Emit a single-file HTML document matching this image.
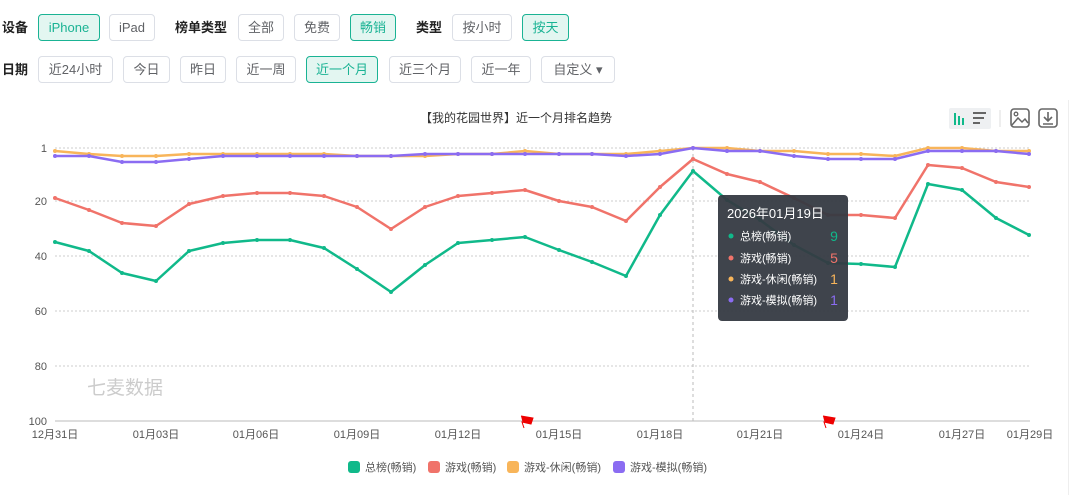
<!DOCTYPE html>
<html><head><meta charset="utf-8"><style>
body{margin:0;width:1080px;height:495px;background:#fff;font-family:"Liberation Sans","Noto Sans CJK SC",sans-serif;position:relative;overflow:hidden}
.b{position:absolute;height:27px;line-height:26px;box-sizing:border-box;border:1px solid #dcdfe6;border-radius:4px;font-size:13px;color:#606266;text-align:center;background:#fff}
.on{background:#e3f6f1;border-color:#1ab394;color:#1ab394}
.l{position:absolute;font-size:13px;font-weight:bold;color:#222;line-height:27px}
.t{position:absolute;font-size:12px;color:#333}
</style></head><body>
<div class="l" style="left:2px;top:14px">设备</div>
<div class="b on" style="left:38px;top:14px;width:62px">iPhone</div>
<div class="b" style="left:109px;top:14px;width:46px">iPad</div>
<div class="l" style="left:175px;top:14px">榜单类型</div>
<div class="b" style="left:238px;top:14px;width:46px">全部</div>
<div class="b" style="left:294px;top:14px;width:46px">免费</div>
<div class="b on" style="left:350px;top:14px;width:46px">畅销</div>
<div class="l" style="left:416px;top:14px">类型</div>
<div class="b" style="left:452px;top:14px;width:60px">按小时</div>
<div class="b on" style="left:522px;top:14px;width:47px">按天</div>
<div class="l" style="left:2px;top:56px">日期</div>
<div class="b" style="left:38px;top:56px;width:75px">近24小时</div>
<div class="b" style="left:123px;top:56px;width:47px">今日</div>
<div class="b" style="left:180px;top:56px;width:46px">昨日</div>
<div class="b" style="left:236px;top:56px;width:60px">近一周</div>
<div class="b on" style="left:306px;top:56px;width:72px">近一个月</div>
<div class="b" style="left:389px;top:56px;width:72px">近三个月</div>
<div class="b" style="left:471px;top:56px;width:60px">近一年</div>
<div class="b" style="left:541px;top:56px;width:74px">自定义 ▾</div>
<div class="t" style="left:420px;top:109px;font-size:12px">【我的花园世界】近一个月排名趋势</div>
<div style="position:absolute;left:1068px;top:100px;width:1px;height:395px;background:#eee"></div>
<svg width="1080" height="495" style="position:absolute;left:0;top:0">
<defs>
<marker id="mg" markerWidth="4" markerHeight="4" refX="2" refY="2" markerUnits="userSpaceOnUse"><circle cx="2" cy="2" r="2" fill="#10b98a"/></marker>
<marker id="mr" markerWidth="4" markerHeight="4" refX="2" refY="2" markerUnits="userSpaceOnUse"><circle cx="2" cy="2" r="2" fill="#f0736a"/></marker>
<marker id="mo" markerWidth="4" markerHeight="4" refX="2" refY="2" markerUnits="userSpaceOnUse"><circle cx="2" cy="2" r="2" fill="#f8b55a"/></marker>
<marker id="mp" markerWidth="4" markerHeight="4" refX="2" refY="2" markerUnits="userSpaceOnUse"><circle cx="2" cy="2" r="2" fill="#8b6cf2"/></marker>
</defs>
<rect x="949" y="108" width="42" height="21" rx="2" fill="#eef0f2"/>
<g stroke="#10b98a" stroke-width="2"><line x1="955" y1="113" x2="955" y2="125"/><line x1="959" y1="116" x2="959" y2="125"/><line x1="963" y1="118" x2="963" y2="125"/></g>
<g stroke="#666" stroke-width="2"><line x1="973" y1="113" x2="986" y2="113"/><line x1="973" y1="118" x2="984" y2="118"/><line x1="973" y1="123" x2="980" y2="123"/></g>
<line x1="1000" y1="110" x2="1000" y2="127" stroke="#ddd"/>
<rect x="1011" y="109" width="18" height="18" rx="3" fill="none" stroke="#666" stroke-width="1.6"/>
<path d="M1012 125 L1018 118 L1022 122 L1025 119 L1028 123" fill="none" stroke="#666" stroke-width="1.5"/><circle cx="1016" cy="114" r="1.8" fill="none" stroke="#666" stroke-width="1.3"/>
<rect x="1039" y="109" width="18" height="18" rx="3" fill="none" stroke="#666" stroke-width="1.6"/>
<path d="M1048 112 V121 M1044 117 L1048 121 L1052 117 M1043 124 H1053" fill="none" stroke="#666" stroke-width="1.6"/>
<g stroke="#ccc" stroke-dasharray="2,2"><line x1="55" y1="148" x2="1030" y2="148"/><line x1="55" y1="201" x2="1030" y2="201"/><line x1="55" y1="256" x2="1030" y2="256"/><line x1="55" y1="311" x2="1030" y2="311"/><line x1="55" y1="366" x2="1030" y2="366"/></g>
<line x1="55" y1="421" x2="1030" y2="421" stroke="#bbb"/>
<line x1="693" y1="148" x2="693" y2="421" stroke="#bbb" stroke-dasharray="3,3"/>
<g font-size="11" fill="#555" text-anchor="end"><text x="47" y="152">1</text><text x="47" y="205">20</text><text x="47" y="260">40</text><text x="47" y="315">60</text><text x="47" y="370">80</text><text x="47" y="425">100</text></g>
<g font-size="11" fill="#555" text-anchor="middle"><text x="55" y="438">12月31日</text><text x="156" y="438">01月03日</text><text x="256" y="438">01月06日</text><text x="357" y="438">01月09日</text><text x="458" y="438">01月12日</text><text x="559" y="438">01月15日</text><text x="660" y="438">01月18日</text><text x="760" y="438">01月21日</text><text x="861" y="438">01月24日</text><text x="962" y="438">01月27日</text><text x="1030" y="438">01月29日</text></g>
<text x="87" y="394" font-size="19" fill="#ccc">七麦数据</text>
<path d="M521 416 L533 418 L531 424 L522 422 L524 428" fill="#e00" stroke="#e00" stroke-width="1"/>
<path d="M823 416 L835 418 L833 424 L824 422 L826 428" fill="#e00" stroke="#e00" stroke-width="1"/>
<g fill="none" stroke-width="2.5" stroke-linejoin="round">
<polyline stroke="#f8b55a" marker-start="url(#mo)" marker-mid="url(#mo)" marker-end="url(#mo)" points="55,151 89,154 122,156 156,156 189,154 223,154 257,154 290,154 324,154 357,156 391,156 425,156 458,154 492,154 525,151 559,154 592,154 626,154 660,151 693,148 727,148 760,151 794,151 828,154 861,154 895,156 928,148 962,148 996,151 1029,151"/>
<polyline stroke="#8b6cf2" marker-start="url(#mp)" marker-mid="url(#mp)" marker-end="url(#mp)" points="55,156 89,156 122,162 156,162 189,159 223,156 257,156 290,156 324,156 357,156 391,156 425,154 458,154 492,154 525,154 559,154 592,154 626,156 660,154 693,148 727,151 760,151 794,156 828,159 861,159 895,159 928,151 962,151 996,151 1029,154"/>
<polyline stroke="#f0736a" marker-start="url(#mr)" marker-mid="url(#mr)" marker-end="url(#mr)" points="55,198 89,210 122,223 156,226 189,204 223,196 257,193 290,193 324,196 357,207 391,229 425,207 458,196 492,193 525,190 559,201 592,207 626,221 660,187 693,159 727,174 760,182 794,198 828,215 861,215 895,218 928,165 962,168 996,182 1029,187"/>
<polyline stroke="#10b98a" marker-start="url(#mg)" marker-mid="url(#mg)" marker-end="url(#mg)" points="55,242 89,251 122,273 156,281 189,251 223,243 257,240 290,240 324,248 357,269 391,292 425,265 458,243 492,240 525,237 559,250 592,262 626,276 660,215 693,171 727,200 760,220 794,245 828,263 861,264 895,267 928,184 962,190 996,218 1029,235"/>
</g>
<rect x="718" y="195" width="130" height="126" rx="4" fill="#353a42" opacity="0.95"/>
<text x="727" y="218" font-size="13" fill="#fff">2026年01月19日</text>
<g font-size="11" fill="#fff"><circle cx="731" cy="236" r="2.5" fill="#10b98a"/><text x="740" y="240">总榜(畅销)</text>
<circle cx="731" cy="258" r="2.5" fill="#f0736a"/><text x="740" y="262">游戏(畅销)</text>
<circle cx="731" cy="279" r="2.5" fill="#f8b55a"/><text x="740" y="283">游戏-休闲(畅销)</text>
<circle cx="731" cy="300" r="2.5" fill="#8b6cf2"/><text x="740" y="304">游戏-模拟(畅销)</text></g>
<g font-size="14" text-anchor="middle"><text x="834" y="241" fill="#10b98a">9</text><text x="834" y="263" fill="#f0736a">5</text><text x="834" y="284" fill="#f8b55a">1</text><text x="834" y="305" fill="#8b6cf2">1</text></g>
<g font-size="11" fill="#555">
<rect x="348" y="461" width="12" height="12" rx="3" fill="#10b98a"/><text x="365" y="471">总榜(畅销)</text>
<rect x="428" y="461" width="12" height="12" rx="3" fill="#f0736a"/><text x="445" y="471">游戏(畅销)</text>
<rect x="507" y="461" width="12" height="12" rx="3" fill="#f8b55a"/><text x="524" y="471">游戏-休闲(畅销)</text>
<rect x="613" y="461" width="12" height="12" rx="3" fill="#8b6cf2"/><text x="630" y="471">游戏-模拟(畅销)</text></g>
</svg>
</body></html>
